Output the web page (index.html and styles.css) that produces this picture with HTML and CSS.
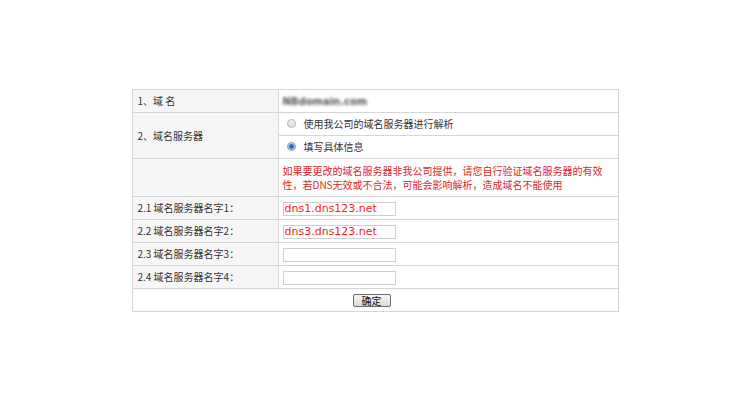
FILE: index.html
```html
<!DOCTYPE html>
<html lang="zh">
<head>
<meta charset="utf-8">
<link rel="stylesheet" href="styles.css">
</head>
<body>
<table class="form">
  <tr class="r23">
    <td class="label">1、域 名</td>
    <td class="val"><span class="blur">NBdomain.com</span></td>
  </tr>
  <tr class="r23">
    <td class="label" rowspan="2">2、域名服务器</td>
    <td class="val"><span class="radio"></span><span class="opt">使用我公司的域名服务器进行解析</span></td>
  </tr>
  <tr class="r23">
    <td class="val"><span class="radio on"></span><span class="opt">填写具体信息</span></td>
  </tr>
  <tr class="r38">
    <td class="label"></td>
    <td class="val warn">如果要更改的域名服务器非我公司提供，请您自行验证域名服务器的有效性，若DNS无效或不合法，可能会影响解析，造成域名不能使用</td>
  </tr>
  <tr class="r23">
    <td class="label">2.1 域名服务器名字1：</td>
    <td class="val"><input class="ns" type="text" value="dns1.dns123.net"></td>
  </tr>
  <tr class="r23">
    <td class="label">2.2 域名服务器名字2：</td>
    <td class="val"><input class="ns" type="text" value="dns3.dns123.net"></td>
  </tr>
  <tr class="r23">
    <td class="label">2.3 域名服务器名字3：</td>
    <td class="val"><input class="ns" type="text" value=""></td>
  </tr>
  <tr class="r23">
    <td class="label">2.4 域名服务器名字4：</td>
    <td class="val"><input class="ns" type="text" value=""></td>
  </tr>
  <tr class="r23">
    <td class="submit" colspan="2"><button class="btn" type="button">确定</button></td>
  </tr>
</table>
</body>
</html>
```
FILE: styles.css
```css
html, body {
  margin: 0;
  padding: 0;
  background: #fff;
}
body {
  font-family: "Noto Sans CJK TC", "DejaVu Sans", sans-serif;
  font-size: 10px;
  color: #333;
}
.form {
  border-collapse: collapse;
  width: 487px;
  margin: 89px auto 0;
  table-layout: fixed;
}
.form td {
  border: 1px solid #d6d6d6;
  padding: 0 4px;
  vertical-align: middle;
  line-height: 14px;
}
.r23 td { height: 22px; }
.r38 td { height: 37px; }
.form .label {
  width: 136px;
  padding-left: 5px;
  background: #f6f6f6;
}
.val { background: #fff; }
.blur {
  color: #555;
  font-family: "DejaVu Sans", sans-serif;
  font-size: 10px;
  font-weight: bold;
  filter: blur(1.4px);
}
.radio {
  display: inline-block;
  width: 9px;
  height: 9px;
  border-radius: 50%;
  border: 1px solid #b5b5b5;
  background: linear-gradient(#f2f2f2, #dcdcdc);
  vertical-align: middle;
  margin: 0 8px 0 4px;
  position: relative;
  top: -1px;
  box-sizing: border-box;
}
.radio.on {
  background: radial-gradient(circle, #1c5fa8 0, #3b83cf 2px, #a7c6e6 3px, #eaeaea 4px);
  border-color: #8a9bb0;
}
.opt { vertical-align: middle; }
.warn {
  color: #e0262a;
  line-height: 17px;
  padding-top: 2px;
}
.ns {
  box-sizing: border-box;
  width: 113px;
  height: 14px;
  border: 1px solid #cfcfcf;
  padding: 0 1px;
  margin: 0;
  font-family: "DejaVu Sans", sans-serif;
  font-size: 11px;
  color: #ff1a1a;
  background: #fff;
  vertical-align: middle;
  outline: none;
}
.submit {
  text-align: center;
  padding: 0;
}
.btn {
  font-family: "Noto Sans CJK TC", sans-serif;
  font-size: 10px;
  line-height: 11px;
  color: #111;
  width: 38px;
  height: 13px;
  padding: 0;
  border: 1px solid #6e6e6e;
  border-radius: 2px;
  background: linear-gradient(#f8f8f8, #d8d8d8);
  vertical-align: middle;
  margin-left: -7px;
}
```
